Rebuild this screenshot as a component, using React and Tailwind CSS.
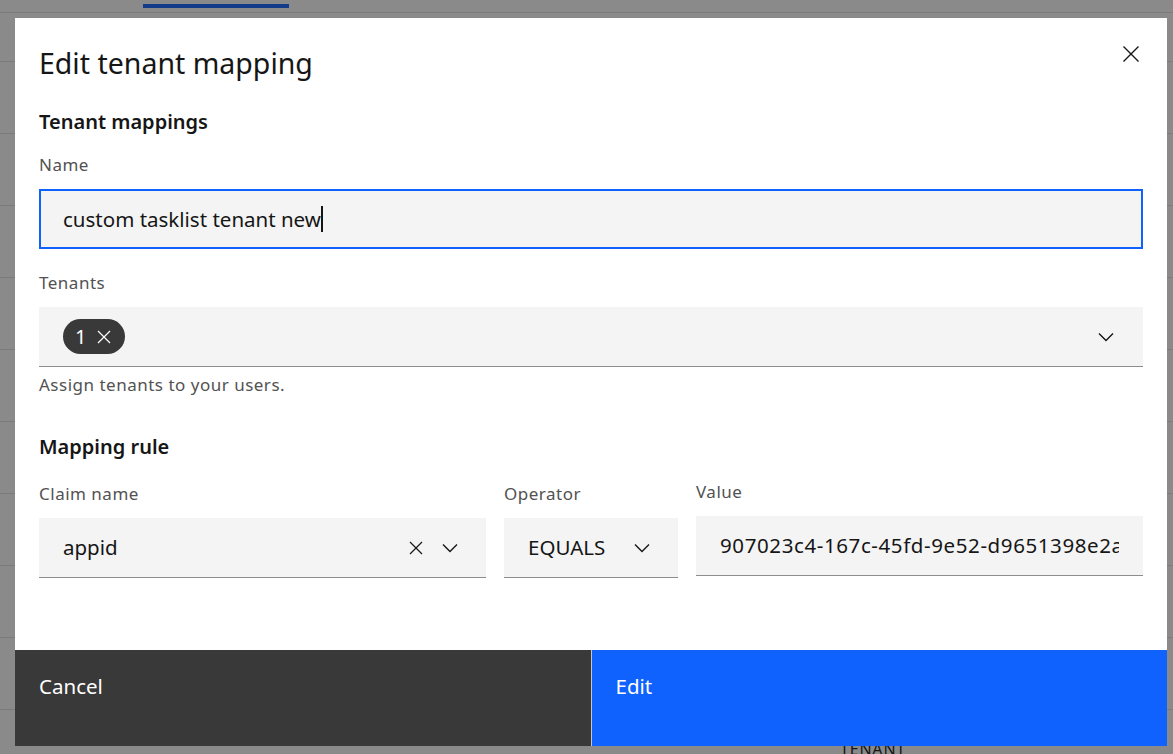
import React from 'react';

const FONT = { fontFamily: '"Noto Sans", "Open Sans", sans-serif' };

const CloseIcon = ({ size = 16, stroke = 1.3 }) => (
  <svg width={size} height={size} viewBox="0 0 16 16" fill="none" stroke="currentColor" strokeWidth={stroke}>
    <path d="M2 2L14 14M14 2L2 14" />
  </svg>
);

const ChevronDown = () => (
  <svg width="16" height="10" viewBox="0 0 16 10" fill="none" stroke="currentColor" strokeWidth="1.4">
    <path d="M1 1.5L8 8.5L15 1.5" />
  </svg>
);

const Label = ({ children }) => (
  <div className="text-[17px] leading-[24px] tracking-[0.5px] text-[#525252]">{children}</div>
);

// the page behind the modal, dimmed by the overlay
const BackgroundPage = () => {
  const rows = [0, 1, 2, 3, 4, 5, 6, 7, 8, 9];
  return (
    <div className="w-full h-[754px] overflow-hidden bg-white" style={FONT}>
      <div className="h-[8px] border-b border-[#e0e0e0] box-content">
        <div className="ml-[143px] w-[146px] h-[4px] mt-[4px] bg-[#0f62fe]" />
      </div>
      <div className="h-[49px] border-b border-[#e0e0e0] pl-[842px] pt-[3px] leading-[16px] text-[16px] tracking-wider text-[#161616]">
        ROLE
      </div>
      {rows.map((r) => (
        <div key={r} className="h-[72px] border-b border-[#e0e0e0] pl-[840px] pt-[31px] leading-[16px] text-[16px] tracking-wider text-[#161616]">
          {r === 9 ? 'TENANT' : ''}
        </div>
      ))}
    </div>
  );
};

export default function App() {
  return (
    <div className="relative w-full h-[754px] overflow-hidden">
      <BackgroundPage />

      <div className="absolute inset-0 bg-[#161616]/50">
        <div className="absolute left-[15px] top-[18px] w-[1152px] h-[728px] bg-white flex flex-col text-[#161616]" style={FONT}>
          <button className="absolute top-[26px] right-[26px] text-[#161616]">
            <CloseIcon size={20} stroke={1.1} />
          </button>

          <div className="px-[24px] pt-[27px]">
            <h2 className="text-[28.5px] leading-[36px] font-normal">Edit tenant mapping</h2>

            <h3 className="mt-[27px] text-[20px] leading-[28px] font-semibold">Tenant mappings</h3>

            <div className="mt-[17px]">
              <Label>Name</Label>
              <div className="mt-[12px] h-[60px] bg-[#f4f4f4] border-2 border-[#0f62fe] pl-[22px] flex items-center text-[20.5px]">
                <span>custom tasklist tenant new</span>
                <span className="inline-block w-[2px] h-[26px] bg-[#161616]" />
              </div>
            </div>

            <div className="mt-[22px]">
              <Label>Tenants</Label>
              <div className="mt-[12px] h-[60px] bg-[#f4f4f4] border-b border-[#8d8d8d] pl-[24px] pr-[29px] flex items-center justify-between">
                <span className="h-[35px] w-[62px] rounded-full bg-[#393939] text-white flex items-center pl-[12px] gap-[10px] text-[20px]">
                  <span>1</span>
                  <CloseIcon size={16} stroke={1.2} />
                </span>
                <ChevronDown />
              </div>
              <div className="mt-[8px] text-[17px] leading-[20px] tracking-[0.5px] text-[#525252]">Assign tenants to your users.</div>
            </div>

            <h3 className="mt-[38px] text-[20px] leading-[28px] font-semibold">Mapping rule</h3>

            <div className="mt-[21px] grid grid-cols-[447px_174px_minmax(0,1fr)] gap-[18px] items-start">
              <div>
                <Label>Claim name</Label>
                <div className="mt-[12px] h-[60px] bg-[#f4f4f4] border-b border-[#8d8d8d] pl-[24px] pr-[28px] flex items-center text-[20.5px]">
                  <span className="flex-1">appid</span>
                  <span className="mr-[18px]"><CloseIcon size={16} stroke={1.2} /></span>
                  <ChevronDown />
                </div>
              </div>
              <div>
                <Label>Operator</Label>
                <div className="mt-[12px] h-[60px] bg-[#f4f4f4] border-b border-[#8d8d8d] pl-[24px] pr-[28px] flex items-center justify-between text-[20.5px]">
                  <span>EQUALS</span>
                  <ChevronDown />
                </div>
              </div>
              <div className="-mt-[2px] min-w-0">
                <Label>Value</Label>
                <div className="mt-[12px] h-[60px] bg-[#f4f4f4] border-b border-[#8d8d8d] px-[24px] flex items-center text-[20.5px]">
                  <div className="flex-1 min-w-0 overflow-hidden whitespace-nowrap tracking-[0.6px]">
                    907023c4-167c-45fd-9e52-d9651398e2a1
                  </div>
                </div>
              </div>
            </div>
          </div>

          <div className="mt-auto h-[96px] grid grid-cols-2 gap-px bg-[#c6c6c6] text-white text-[20.5px]">
            <button className="bg-[#393939] text-left px-[24px] pt-[24px] leading-[24px] flex items-start">Cancel</button>
            <button className="bg-[#0f62fe] text-left px-[24px] pt-[24px] leading-[24px] flex items-start">Edit</button>
          </div>
        </div>
      </div>
    </div>
  );
}
